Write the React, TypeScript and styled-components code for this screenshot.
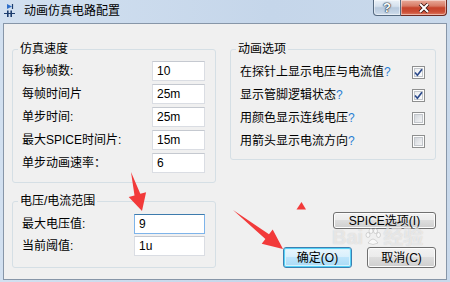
import React from 'react'
import styled, { createGlobalStyle } from 'styled-components'

const FONT = `"Liberation Sans Narrow", "Liberation Sans", "Noto Sans CJK SC", sans-serif`

const GlobalStyle = createGlobalStyle`
    html, body {
        margin: 0;
        padding: 0;
    }

    body {
        background: #c8d8ea;
        font-family: ${FONT};
    }
`

const Window = styled.div`
    position: relative;
    width: 450px;
    height: 282px;
    box-sizing: border-box;
    display: flex;
    flex-direction: column;
    padding: 0 3px 2px;
    background: linear-gradient(90deg, #d2e0f0, #c5d6ea 60%, #c9d9eb);
    overflow: hidden;
`

const TitleBar = styled.div`
    height: 23px;
    display: flex;
    align-items: flex-start;
    padding-left: 1px;
`

const AppIcon = styled.svg`
    margin-top: 4px;
    flex: none;
`

const Title = styled.div`
    margin-left: 9px;
    font-size: 12px;
    line-height: 23px;
    color: #000;
`

const Caption = styled.div`
    margin-left: auto;
    display: flex;
`

const CaptionButton = styled.div<{ $close?: boolean }>`
    box-sizing: border-box;
    width: ${p => (p.$close ? 46 : 28)}px;
    height: 16px;
    display: flex;
    align-items: center;
    justify-content: center;
    border: 1px solid ${p => (p.$close ? '#6d2a22' : '#566a80')};
    border-top: none;
    border-left-width: ${p => (p.$close ? 0 : 1)}px;
    border-radius: ${p => (p.$close ? '0 0 4px 0' : '0 0 0 4px')};
    background: ${p =>
        p.$close
            ? 'linear-gradient(#e9ab9b, #d77a65 40%, #c6432b 52%, #cc4f37 80%, #e07f66)'
            : 'linear-gradient(#eaf1f8, #d4e0ed 42%, #b7c9dd 52%, #c6d5e6 85%, #d6e2ef)'};
    box-shadow: inset 0 0 0 1px rgba(255, 255, 255, 0.45);
    color: #fff;
    font: bold 13px "Liberation Sans", sans-serif;
    text-shadow: 0 0 1px #1e2c3c, 0 0 1px #1e2c3c, 0 0 2px #1e2c3c;
`

const Client = styled.div`
    flex: 1;
    display: flex;
    gap: 14px;
    padding: 17px 10px 0 8px;
    background: #f0f0f0;
    border: 1px solid #8796a8;
`

const Column = styled.div<{ $w: number }>`
    width: ${p => p.$w}px;
    display: flex;
    flex-direction: column;
    gap: 10px;
`

const Group = styled.fieldset<{ $pb: number; $pt?: number }>`
    margin: 0;
    min-width: 0;
    padding: ${p => p.$pt ?? 4}px 10px ${p => p.$pb}px 9px;
    border: 1px solid #d5dfe5;
    border-radius: 3px;
`

const Legend = styled.legend`
    margin-left: -4px;
    padding: 0 2px;
    height: 16px;
    font-size: 12px;
    line-height: 16px;
    color: #000;
`

const Form = styled.div<{ $field: number; $gap: number }>`
    display: grid;
    grid-template-columns: 1fr ${p => p.$field}px;
    grid-auto-rows: 20px;
    row-gap: ${p => p.$gap}px;
    align-items: center;
`

const Label = styled.span`
    font-size: 12px;
    line-height: 16px;
    color: #000;
    white-space: nowrap;
`

const Field = styled.input<{ $focus?: boolean }>`
    box-sizing: border-box;
    width: 100%;
    height: 20px;
    margin: 0;
    padding: 0 4px;
    border: 1px solid ${p => (p.$focus ? '#7eb4ea' : '#dadde3')};
    border-top-color: ${p => (p.$focus ? '#3d7bad' : '#c5c9d0')};
    background: #fff;
    font: 12px ${FONT};
    color: #000;
    outline: none;
`

const Options = styled.div`
    display: grid;
    grid-template-columns: 1fr 13px;
    grid-auto-rows: 22px;
    row-gap: 1px;
    align-items: center;
`

const Hint = styled.span`
    color: #2a7fd4;
`

const Check = styled.span<{ $on?: boolean }>`
    box-sizing: border-box;
    width: 13px;
    height: 13px;
    display: flex;
    align-items: center;
    justify-content: center;
    border: 1px solid #8e8f8f;
    background: ${p =>
        p.$on
            ? 'linear-gradient(135deg, #e6e8eb, #f7f8f9 60%, #ffffff)'
            : 'linear-gradient(135deg, #c9cdd3, #e6e8eb 55%, #fbfbfb)'};
    box-shadow: inset 0 0 0 1px #fdfdfd, inset 0 0 0 2px #c3c7cc;
`

const ButtonArea = styled.div`
    display: flex;
    flex-direction: column;
    align-items: flex-end;
    gap: 18px;
    padding-top: 42px;
`

const ButtonRow = styled.div`
    display: flex;
    gap: 15px;
`

const Button = styled.button<{ $w: number; $h: number; $default?: boolean }>`
    box-sizing: border-box;
    width: ${p => p.$w}px;
    height: ${p => p.$h}px;
    margin: 0;
    padding: 0;
    border: 1px solid ${p => (p.$default ? '#3c7fb1' : '#707070')};
    border-radius: 3px;
    background: ${p =>
        p.$default
            ? 'linear-gradient(#e9f6fd, #d7effc 50%, #bde5fb 50%, #a9daf5)'
            : 'linear-gradient(#f2f2f2, #ebebeb 50%, #dddddd 50%, #cfcfcf)'};
    box-shadow: ${p =>
        p.$default ? 'inset 0 0 0 1px #55d2f7, inset 0 0 0 2px #d8f3fd' : 'inset 0 0 0 1px #fcfcfc'};
    font: 12px ${FONT};
    line-height: 14px;
    color: #000;
`

const Overlay = styled.svg`
    position: absolute;
    left: 0;
    top: 0;
    pointer-events: none;
`

// faint site watermark lying over the buttons
const Watermark = styled.div`
    position: absolute;
    left: 332px;
    top: 226px;
    display: flex;
    align-items: center;
    gap: 2px;
    pointer-events: none;
    color: rgba(255, 255, 255, 0.55);
    text-shadow: 0 0 1px rgba(150, 150, 150, 0.45);
    font: bold 20px "Liberation Sans", "Noto Sans CJK SC", sans-serif;
    line-height: 22px;
`

const speed = [
    { label: '每秒帧数:', value: '10' },
    { label: '每帧时间片', value: '25m' },
    { label: '单步时间:', value: '25m' },
    { label: '最大SPICE时间片:', value: '15m' },
    { label: '单步动画速率：', value: '6' },
]

const range = [
    { label: '最大电压值:', value: '9', focus: true },
    { label: '当前阈值:', value: '1u' },
]

const options = [
    { label: '在探针上显示电压与电流值', on: true },
    { label: '显示管脚逻辑状态', on: true },
    { label: '用颜色显示连线电压', on: false },
    { label: '用箭头显示电流方向', on: false },
]

const App = () => {
    return (
        <>
            <GlobalStyle />
            <Window>
                <TitleBar>
                    <AppIcon width="11" height="13" viewBox="0 0 11 13">
                        <polygon points="3,0 8,2.5 3,5" fill="#2f6fc9" />
                        <line x1="8.5" y1="0" x2="8.5" y2="5" stroke="#1d3d6e" strokeWidth="1.2" />
                        <line x1="0" y1="9.5" x2="11" y2="9.5" stroke="#1d3d6e" strokeWidth="1" />
                        <rect x="3" y="6.5" width="1.6" height="6.5" fill="#1d3d6e" />
                        <rect x="6.4" y="6.5" width="1.6" height="6.5" fill="#1d3d6e" />
                    </AppIcon>
                    <Title>动画仿真电路配置</Title>
                    <Caption>
                        <CaptionButton>?</CaptionButton>
                        <CaptionButton $close>
                            <svg width="12" height="10" viewBox="0 0 12 10">
                                <path d="M2 1 L10 9 M10 1 L2 9" stroke="#3a1410" strokeWidth="3.6" />
                                <path d="M2 1 L10 9 M10 1 L2 9" stroke="#fff" strokeWidth="2" />
                            </svg>
                        </CaptionButton>
                    </Caption>
                </TitleBar>

                <Client>
                    <Column $w={204}>
                        <Group $pb={9}>
                            <Legend>仿真速度</Legend>
                            <Form $field={53} $gap={3}>
                                {speed.map(row => (
                                    <React.Fragment key={row.label}>
                                        <Label>{row.label}</Label>
                                        <Field readOnly value={row.value} />
                                    </React.Fragment>
                                ))}
                            </Form>
                        </Group>
                        <Group $pt={5} $pb={11}>
                            <Legend>电压/电流范围</Legend>
                            <Form $field={71} $gap={2}>
                                {range.map(row => (
                                    <React.Fragment key={row.label}>
                                        <Label>{row.label}</Label>
                                        <Field readOnly value={row.value} $focus={row.focus} />
                                    </React.Fragment>
                                ))}
                            </Form>
                        </Group>
                    </Column>

                    <Column $w={206}>
                        <Group $pb={7}>
                            <Legend>动画选项</Legend>
                            <Options>
                                {options.map(opt => (
                                    <React.Fragment key={opt.label}>
                                        <Label>
                                            {opt.label}
                                            <Hint>?</Hint>
                                        </Label>
                                        <Check $on={opt.on}>
                                            {opt.on && (
                                                <svg width="9" height="9" viewBox="0 0 9 9">
                                                    <path
                                                        d="M1 4.5 L3.4 7.2 L8 1.2"
                                                        fill="none"
                                                        stroke="#2d4b8c"
                                                        strokeWidth="1.7"
                                                    />
                                                </svg>
                                            )}
                                        </Check>
                                    </React.Fragment>
                                ))}
                            </Options>
                        </Group>
                        <ButtonArea>
                            <Button $w={103} $h={17}>SPICE选项(I)</Button>
                            <ButtonRow>
                                <Button $w={69} $h={21} $default>确定(O)</Button>
                                <Button $w={69} $h={21}>取消(C)</Button>
                            </ButtonRow>
                        </ButtonArea>
                    </Column>
                </Client>

                <Watermark>
                    <span>Bai</span>
                    <svg width="16" height="18" viewBox="0 0 16 18">
                        <g fill="rgba(255,255,255,0.6)" stroke="rgba(150,150,150,0.45)" strokeWidth="0.8">
                            <ellipse cx="3" cy="7" rx="2" ry="2.5" />
                            <ellipse cx="6" cy="3" rx="2" ry="2.5" />
                            <ellipse cx="10.5" cy="3" rx="2" ry="2.5" />
                            <ellipse cx="13.5" cy="7" rx="2" ry="2.5" />
                            <path d="M3 15 Q8 7 13 15 Q8 18 3 15 Z" />
                        </g>
                    </svg>
                    <span>经验</span>
                </Watermark>

                <Overlay width="450" height="282" viewBox="0 0 450 282">
                    <polygon
                        points="131,172 140.3,193.8 146.1,192.2 142,211 128.7,197 134.5,195.4"
                        fill="#f23a3a"
                    />
                    <polygon
                        points="233,210 269,234.3 272.7,229.6 283,249 261.7,243.8 265.4,239.1"
                        fill="#f23a3a"
                    />
                    <polygon points="301.5,202 306,209.5 296.5,209.5" fill="#f23a3a" />
                </Overlay>
            </Window>
        </>
    )
}

export default App
